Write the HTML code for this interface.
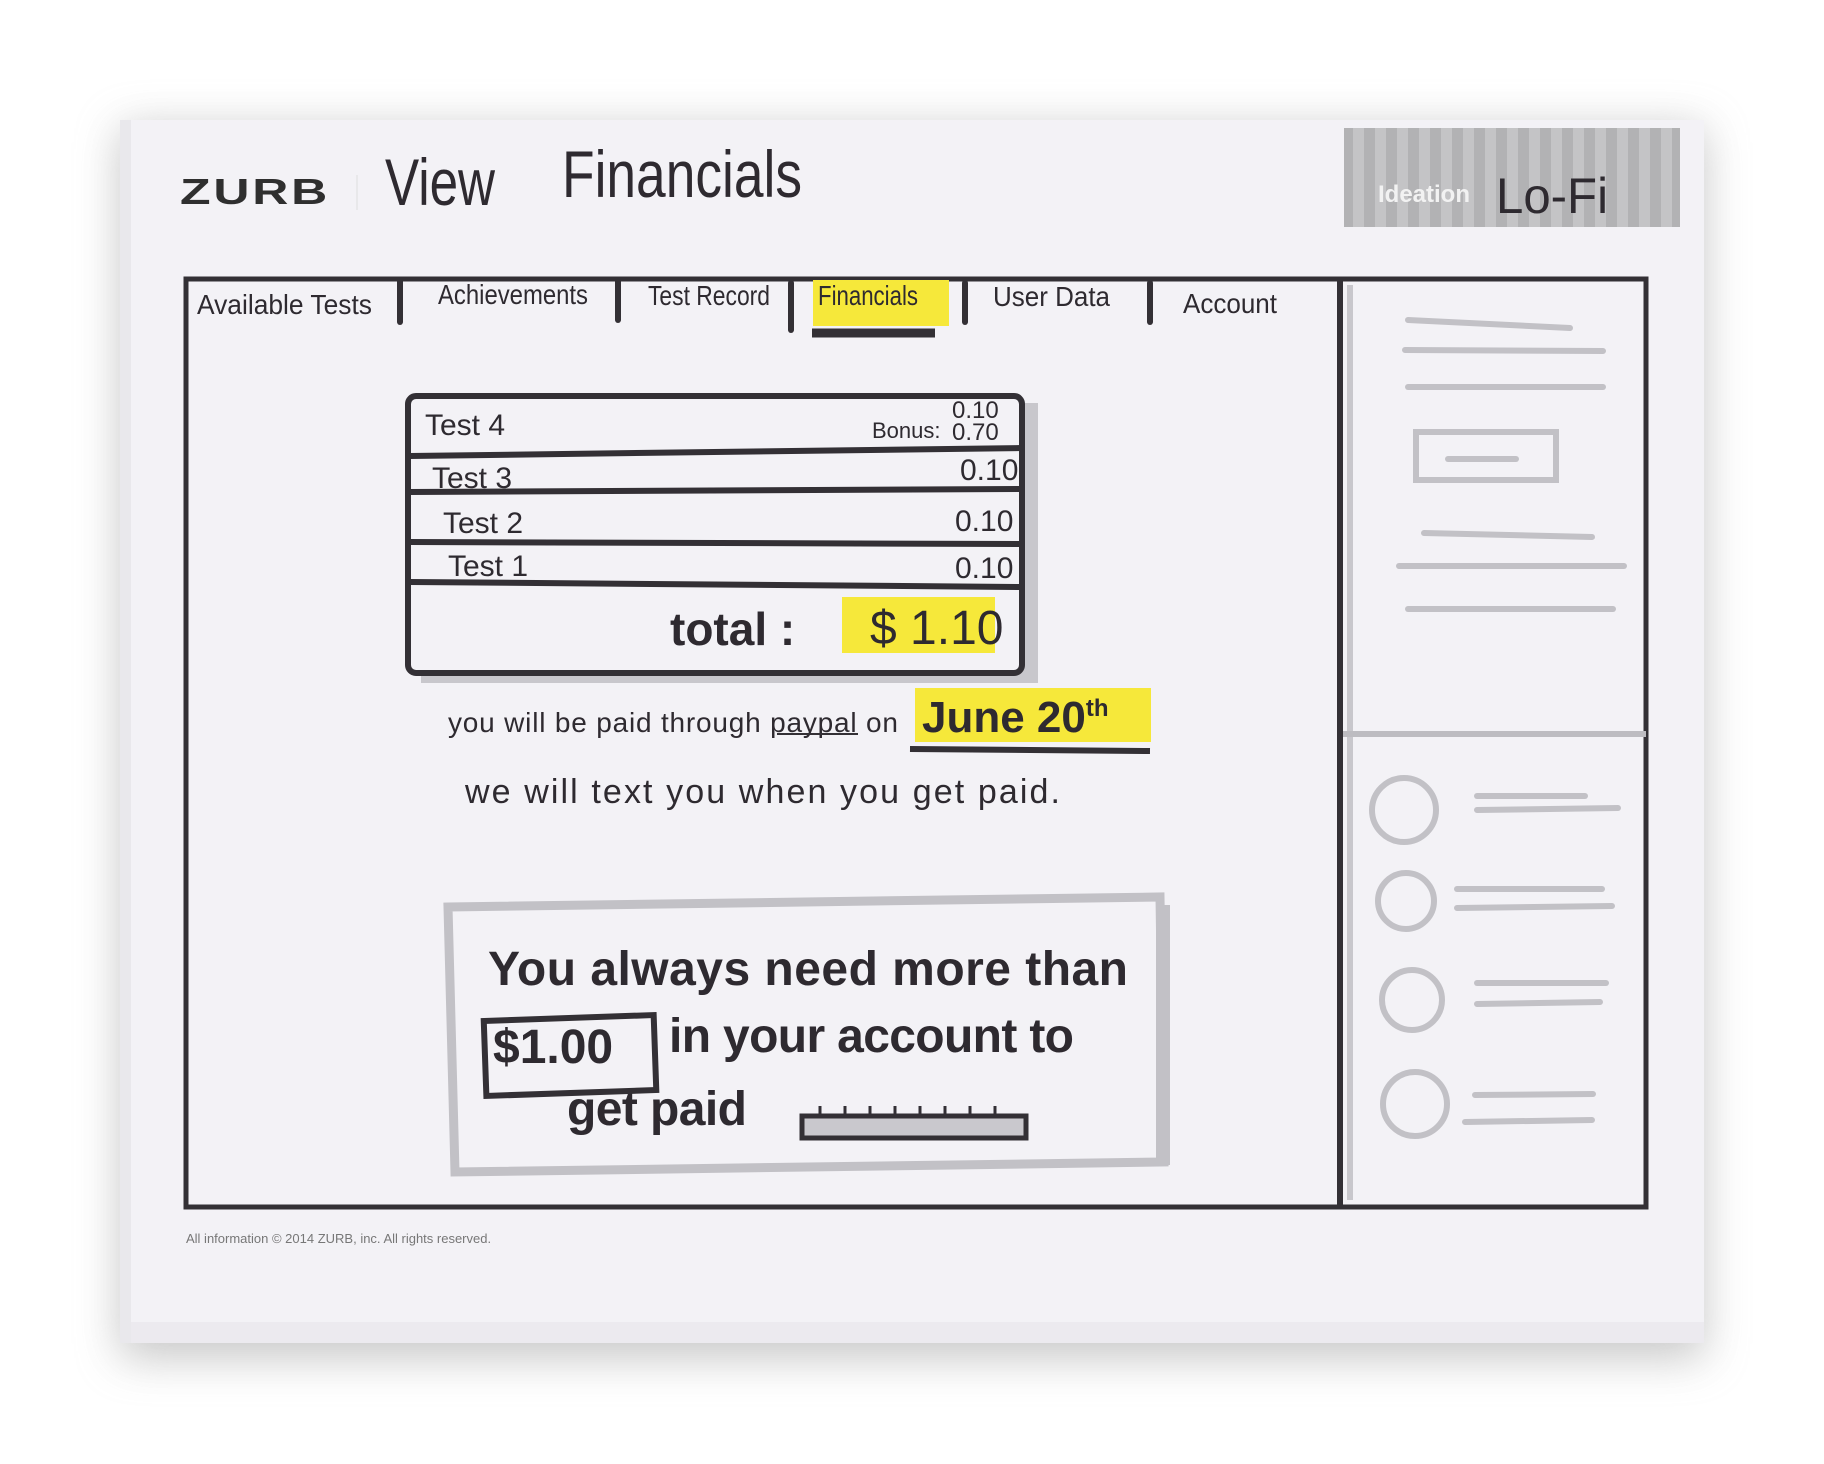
<!DOCTYPE html>
<html><head><meta charset="utf-8"><style>
html,body{margin:0;padding:0;background:#fff;}
svg{display:block}
.h{font-family:"Liberation Sans Narrow","Liberation Sans",sans-serif;fill:#2e2a30}
</style></head><body>
<svg width="1824" height="1464" viewBox="0 0 1824 1464" xmlns="http://www.w3.org/2000/svg">
<defs>
<filter id="sh" x="-10%" y="-10%" width="120%" height="120%"><feGaussianBlur stdDeviation="22"/></filter>
<pattern id="st" width="22" height="10" patternUnits="userSpaceOnUse"><rect width="22" height="10" fill="#c4c4c6"/><rect width="11" height="10" fill="#b2b2b4"/></pattern>
</defs>
<rect width="1824" height="1464" fill="#fff"/>
<rect x="120" y="128" width="1584" height="1230" fill="#9a9a9a" opacity="0.55" filter="url(#sh)"/>
<rect x="120" y="120" width="1584" height="1223" fill="#f3f2f6"/>
<rect x="120" y="120" width="11" height="1223" fill="#e9e8ec"/>
<rect x="131" y="1322" width="1573" height="21" fill="#eceaef"/>
<!-- header -->
<text x="180" y="204" font-family="Liberation Sans" font-weight="bold" font-size="36" fill="#2f2f2f" letter-spacing="2" textLength="150" lengthAdjust="spacingAndGlyphs">ZURB</text>
<line x1="357" y1="175" x2="357" y2="210" stroke="#ddd" stroke-width="1"/>
<text class="h" x="385" y="205" font-size="66" textLength="110" lengthAdjust="spacingAndGlyphs">View</text>
<text class="h" x="562" y="197" font-size="66" textLength="240" lengthAdjust="spacingAndGlyphs">Financials</text>
<rect x="1344" y="128" width="336" height="99" fill="url(#st)"/>
<text x="1378" y="202" font-family="Liberation Sans" font-weight="bold" font-size="24" fill="#f2f2f2">Ideation</text>
<text class="h" x="1496" y="213" font-size="50" textLength="112" lengthAdjust="spacingAndGlyphs">Lo-Fi</text>
<!-- main frame -->
<rect x="186" y="279" width="1460" height="928" fill="none" stroke="#333035" stroke-width="5"/>
<line x1="1340" y1="279" x2="1340" y2="1207" stroke="#333035" stroke-width="6"/>
<line x1="1350" y1="285" x2="1350" y2="1200" stroke="#c8c7cc" stroke-width="6"/>
<line x1="1343" y1="734" x2="1646" y2="734" stroke="#bdbcc1" stroke-width="6"/>
<!-- tabs -->
<g stroke="#333035" stroke-width="6" stroke-linecap="round">
<line x1="400" y1="281" x2="400" y2="322"/><line x1="618" y1="281" x2="618" y2="320"/>
<line x1="791" y1="283" x2="791" y2="330"/><line x1="965" y1="283" x2="965" y2="322"/>
<line x1="1150" y1="283" x2="1150" y2="322"/>
</g>
<rect x="813" y="280" width="136" height="46" fill="#f6e83a"/>
<line x1="812" y1="333" x2="935" y2="333" stroke="#333035" stroke-width="9"/>
<g class="h" font-size="28">
<text x="197" y="314" textLength="175" lengthAdjust="spacingAndGlyphs">Available  Tests</text>
<text x="438" y="304" textLength="150" lengthAdjust="spacingAndGlyphs">Achievements</text>
<text x="648" y="305" textLength="122" lengthAdjust="spacingAndGlyphs">Test Record</text>
<text x="818" y="305" textLength="100" lengthAdjust="spacingAndGlyphs">Financials</text>
<text x="993" y="306" textLength="117" lengthAdjust="spacingAndGlyphs">User Data</text>
<text x="1183" y="313" textLength="94" lengthAdjust="spacingAndGlyphs">Account</text>
</g>
<!-- table -->
<rect x="413" y="397" width="617" height="280" fill="#c8c7cc" transform="translate(8,6)"/>
<rect x="408" y="396" width="614" height="277" rx="8" fill="#f3f2f6" stroke="#333035" stroke-width="6"/>
<g stroke="#333035" stroke-width="6">
<line x1="410" y1="456" x2="1022" y2="448"/><line x1="410" y1="492" x2="1022" y2="489"/>
<line x1="410" y1="542" x2="1022" y2="544"/><line x1="410" y1="582" x2="1022" y2="587"/>
</g>
<g class="h" font-size="30">
<text x="425" y="435">Test 4</text>
<text x="872" y="438" font-size="22">Bonus:</text>
<text x="952" y="418" font-size="24">0.10</text>
<text x="952" y="440" font-size="24">0.70</text>
<text x="432" y="488">Test 3</text><text x="960" y="480">0.10</text>
<text x="443" y="533">Test 2</text><text x="955" y="531">0.10</text>
<text x="448" y="576">Test 1</text><text x="955" y="578">0.10</text>
</g>
<rect x="842" y="597" width="153" height="56" fill="#f6e83a"/>
<text class="h" x="670" y="645" font-size="46" font-weight="bold">total :</text>
<text class="h" x="870" y="644" font-size="48">$ 1.10</text>
<!-- messages -->
<rect x="915" y="688" width="236" height="54" fill="#f6e83a"/>
<line x1="910" y1="749" x2="1150" y2="751" stroke="#333035" stroke-width="6"/>
<text class="h" x="448" y="732" font-size="28" textLength="450" lengthAdjust="spacing">you will be paid through paypal on</text>
<line x1="777" y1="734" x2="858" y2="734" stroke="#333035" stroke-width="2"/>
<text class="h" x="922" y="732" font-size="44" font-weight="bold">June 20<tspan font-size="24" dy="-16">th</tspan></text>
<text class="h" x="465" y="803" font-size="34" textLength="595" lengthAdjust="spacing">we will text you when you get paid.</text>
<!-- gray box -->
<path d="M448 907 L1160 897 L1164 1162 L455 1172 Z" fill="none" stroke="#c2c1c6" stroke-width="9"/>
<line x1="1163" y1="905" x2="1163" y2="1165" stroke="#c2c1c6" stroke-width="14"/>
<g class="h" font-weight="bold" font-size="48">
<text x="488" y="985" textLength="640" lengthAdjust="spacing">You always need more than</text>
<text x="493" y="1063">$1.00</text>
<text x="669" y="1052" textLength="405" lengthAdjust="spacing">in your account to</text>
<text x="567" y="1125" textLength="180" lengthAdjust="spacing">get paid</text>
</g>
<rect x="485" y="1018" width="170" height="75" fill="none" stroke="#333035" stroke-width="6" transform="rotate(-2 570 1055)"/>
<rect x="802" y="1116" width="224" height="22" fill="#c9c8cd" stroke="#333035" stroke-width="5"/>
<g stroke="#333035" stroke-width="3"><line x1="820" y1="1106" x2="820" y2="1118"/><line x1="845" y1="1106" x2="845" y2="1118"/><line x1="870" y1="1106" x2="870" y2="1118"/><line x1="895" y1="1106" x2="895" y2="1118"/><line x1="920" y1="1106" x2="920" y2="1118"/><line x1="945" y1="1106" x2="945" y2="1118"/><line x1="970" y1="1106" x2="970" y2="1118"/><line x1="995" y1="1106" x2="995" y2="1118"/></g>
<!-- sidebar -->
<g stroke="#c2c1c6" stroke-width="6" stroke-linecap="round" fill="none">
<line x1="1408" y1="320" x2="1570" y2="328"/><line x1="1405" y1="350" x2="1603" y2="351"/>
<line x1="1408" y1="387" x2="1603" y2="387"/>
<rect x="1416" y="432" width="140" height="48"/><line x1="1448" y1="459" x2="1516" y2="459"/>
<line x1="1424" y1="533" x2="1592" y2="537"/><line x1="1399" y1="566" x2="1624" y2="566"/>
<line x1="1408" y1="609" x2="1613" y2="609"/>
<circle cx="1404" cy="810" r="32"/><line x1="1477" y1="796" x2="1585" y2="796"/><line x1="1477" y1="810" x2="1618" y2="808"/>
<circle cx="1406" cy="901" r="28"/><line x1="1457" y1="889" x2="1602" y2="889"/><line x1="1457" y1="908" x2="1612" y2="906"/>
<circle cx="1412" cy="1000" r="30"/><line x1="1477" y1="983" x2="1606" y2="983"/><line x1="1477" y1="1004" x2="1600" y2="1002"/>
<circle cx="1415" cy="1104" r="32"/><line x1="1475" y1="1095" x2="1593" y2="1094"/><line x1="1465" y1="1122" x2="1592" y2="1120"/>
</g>
<text x="186" y="1243" font-family="Liberation Sans" font-size="13" fill="#777">All information © 2014 ZURB, inc.  All rights reserved.</text>
</svg>
</body></html>
